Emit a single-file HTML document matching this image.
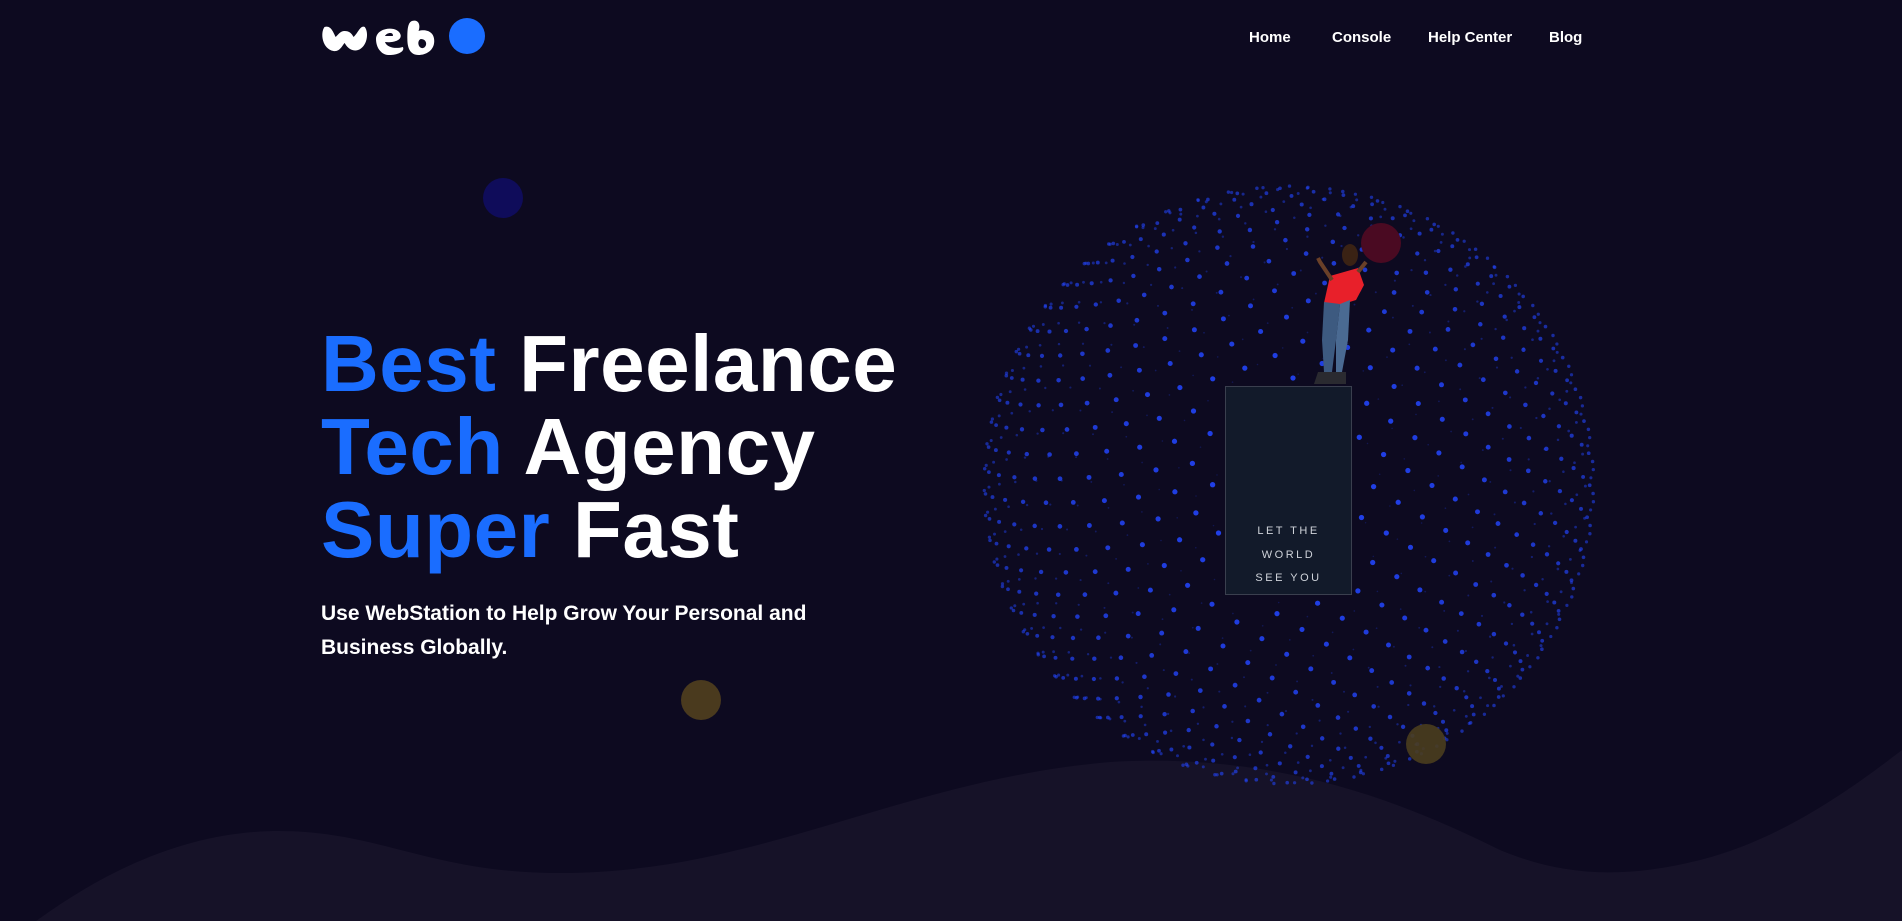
<!DOCTYPE html>
<html><head><meta charset="utf-8"><style>
html,body{margin:0;padding:0;width:1902px;height:921px;overflow:hidden;background:#0d0a20;font-family:"Liberation Sans",sans-serif;}
.abs{position:absolute}
nav a{position:absolute;top:29px;color:#fff;font-weight:bold;font-size:15px;text-decoration:none}
h1{position:absolute;left:321px;top:322px;margin:0;font-size:80px;line-height:83px;color:#fff;font-weight:bold;letter-spacing:0.5px}
h1 span{color:#1a6dff}
.sub{position:absolute;left:321px;top:597px;color:#fff;font-weight:bold;font-size:21px;line-height:34px;width:580px}
.box{position:absolute;left:1225px;top:386px;width:127px;height:209px;background:#121a2a;border:1px solid #3a3f4e;box-sizing:border-box}
.box div{position:absolute;left:0;width:100%;text-align:center;color:#cfd3da;font-size:11px;letter-spacing:2.5px}
</style></head><body>
<svg class="abs" style="left:0;top:0" width="1902" height="921">
<path d="M36 921 C120 860 200 831 279 831 C380 831 430 873 560 873 C760 873 900 780 1110 762 C1274 752 1400 800 1500 850 C1560 875 1620 880 1700 860 C1780 840 1850 790 1902 750 L1902 921 Z" fill="#161228"/>
<g id="dots"></g>
<circle cx="503" cy="198" r="20" fill="#0f0c5a"/>
<circle cx="701" cy="700" r="20" fill="#4a3a1e"/>
<circle cx="1381" cy="243" r="20" fill="#4a0a22"/>
<circle cx="1426" cy="744" r="20" fill="#4a3d1e" opacity=".9"/>
<g>
<ellipse cx="1350" cy="255" rx="8" ry="11" fill="#3a2214"/>
<path d="M1330 276 L1358 268 L1364 285 L1356 300 L1340 305 L1324 303 Z" fill="#e8202a"/>
<path d="M1324 302 L1340 304 L1336 340 L1332 372 L1324 372 L1322 340 Z" fill="#3d5a80"/>
<path d="M1340 304 L1350 300 L1348 340 L1342 372 L1336 372 L1336 340 Z" fill="#4a6a92"/>
<path d="M1318 372 L1334 372 L1336 384 L1314 384 Z" fill="#2a2a30"/>
<path d="M1334 372 L1346 372 L1346 384 L1334 384 Z" fill="#2a2a30"/>
<path d="M1332 280 L1320 262 L1318 258" stroke="#6a4028" stroke-width="4" fill="none"/>
<path d="M1358 272 L1366 262" stroke="#6a4028" stroke-width="4" fill="none"/>
</g>
</svg>
<svg class="abs" style="left:320px;top:15px" width="170" height="42" viewBox="0 0 170 42">
<g transform="translate(0,0) scale(1.12,1)">
<path d="M4 12 C0 18 2 34 12 36 C18 37 20 30 22 28 C24 32 28 37 34 35 C42 32 44 18 40 12 C36 10 34 18 30 22 C28 18 26 16 22 16 C18 16 16 20 14 22 C12 18 10 10 4 12Z" fill="#fff"/>
<path d="M50 24 C50 12 70 10 72 20 C73 26 64 28 58 27 C60 33 68 34 74 32 C76 36 70 40 62 40 C54 40 50 32 50 24Z M58 21 C60 17 66 17 65 21Z" fill="#fff" fill-rule="evenodd"/>
<path d="M82 6 C88 4 90 10 88 16 C94 14 102 16 102 26 C102 36 94 40 88 40 C80 40 78 32 78 24 C78 16 78 8 82 6Z M90 24 C86 26 88 34 92 33 C96 32 96 24 90 24Z" fill="#fff" fill-rule="evenodd"/>
</g>
<circle cx="147" cy="21" r="18" fill="#1a6dff"/>
</svg>
<nav><a style="left:1249px">Home</a><a style="left:1332px">Console</a><a style="left:1428px">Help Center</a><a style="left:1549px">Blog</a></nav>
<h1><span>Best</span> Freelance<br><span>Tech</span> Agency<br><span>Super</span> Fast</h1>
<div class="sub">Use WebStation to Help Grow Your Personal and Business Globally.</div>
<div class="box"><div style="top:138px">LET THE</div><div style="top:162px">WORLD</div><div style="top:185px">SEE YOU</div></div>
<script>
(function(){
var g=document.getElementById('dots'),cx=1289,cy=485,R=305,N=1150,s='';
var rot=0.35;
for(var i=0;i<N;i++){
 var y=1-2*(i+0.5)/N, r=Math.sqrt(1-y*y), th=i*2.39996;
 var x=r*Math.cos(th), z=r*Math.sin(th);
 var y2=y*Math.cos(rot)-z*Math.sin(rot), z2=y*Math.sin(rot)+z*Math.cos(rot);
 var px=cx+x*R, py=cy-y2*R*0.98;
 var d=(z2+1)/2;
 var rad=0.7+d*2.0, op=0.2+d*0.7;
 if(px>1222&&px<1356&&py>384&&py<598)continue;
 s+='<circle cx="'+px.toFixed(1)+'" cy="'+py.toFixed(1)+'" r="'+rad.toFixed(2)+'" fill="#2346ff" opacity="'+op.toFixed(2)+'"/>';
}
g.innerHTML=s;
})();
</script>
</body></html>
